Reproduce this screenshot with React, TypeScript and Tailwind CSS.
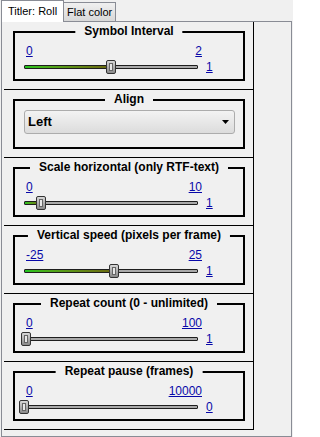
import React from 'react'

type Section = {
  title: string
  combo?: string
  min?: string
  max?: string
  value?: string
  pos?: number
}

const sections: Section[] = [
  { title: 'Symbol Interval', min: '0', max: '2', value: '1', pos: 0.5 },
  { title: 'Align', combo: 'Left' },
  { title: 'Scale horizontal (only RTF-text)', min: '0', max: '10', value: '1', pos: 0.1 },
  { title: 'Vertical speed (pixels per frame)', min: '-25', max: '25', value: '1', pos: 0.52 },
  { title: 'Repeat count (0 - unlimited)', min: '0', max: '100', value: '1', pos: 0.01 },
  { title: 'Repeat pause (frames)', min: '0', max: '10000', value: '0', pos: 0 }
]

const TRACK = 174

const Slider: React.FC<{ pos: number }> = ({ pos }) => {
  const center = pos * TRACK
  return (
    <div className="relative w-[174px] h-[14px] flex items-center">
      <div className="w-full h-[4px] bg-[#a9a9a9] border border-[#1e1e1e] rounded-[1px]" />
      <div
        className="absolute left-[1px] top-[6px] h-[2px] bg-gradient-to-r from-[#1fc41f] to-[#6a6510]"
        style={{ width: center }}
      />
      <div
        className="absolute top-0 w-[10px] h-[14px] rounded-[2px] border border-[#333] bg-gradient-to-b from-[#d8d8d8] to-[#8a8a8a] flex items-center justify-center"
        style={{ left: center - 5 }}
      >
        <div className="w-[4px] h-[8px] bg-[#e8e8e8] border border-[#666]" />
      </div>
    </div>
  )
}

const Link: React.FC<{ children: React.ReactNode }> = ({ children }) => (
  <span className="text-[#0808a8] underline underline-offset-[1px] leading-[14px]">{children}</span>
)

const GroupBox: React.FC<{ s: Section }> = ({ s }) => (
  <div className="relative ml-[9px] w-[232px] h-[50px] border-2 border-black">
    <div className="absolute left-1/2 -translate-x-1/2 top-[-9px] px-[9px] bg-[#f0f0f0] whitespace-nowrap font-bold text-[12px] leading-[14px] text-black">
      {s.title}
    </div>
    {s.combo ? (
      <div className="pt-[9px] pl-[9px]">
        <div className="w-[211px] h-[24px] flex items-center justify-between pl-[3px] pr-[5px] rounded-[3px] border border-[#acacac] bg-gradient-to-b from-[#f3f3f3] to-[#dcdcdc]">
          <span className="font-bold text-[13px] leading-[16px] text-black">{s.combo}</span>
          <svg width="7" height="4" viewBox="0 0 7 4">
            <polygon points="0,0 7,0 3.5,4" fill="#000" />
          </svg>
        </div>
      </div>
    ) : (
      <div className="pl-[9px] pt-[11px]">
        <div className="w-[178px] flex justify-between text-[12px] leading-[14px] pl-[2px]">
          <Link>{s.min}</Link>
          <Link>{s.max}</Link>
        </div>
        <div className="mt-[2px] flex items-center">
          <Slider pos={s.pos ?? 0} />
          <span className="ml-[8px] text-[12px] leading-[14px]">
            <Link>{s.value}</Link>
          </span>
        </div>
      </div>
    )}
  </div>
)

export default function App() {
  return (
    <div className="w-[293px] h-[437px] bg-[#f0f0f0] font-['Liberation_Sans',Arial,sans-serif] text-black overflow-hidden">
      {/* tabs */}
      <div className="h-[21px] flex items-end pl-[1px]">
        <div className="relative z-10 w-[63px] h-[22px] mb-[-1px] bg-white border border-b-0 border-[#898c95] flex items-center pl-[6px] pb-[1px] text-[11px]">
          Titler: Roll
        </div>
        <div className="w-[52px] h-[19px] border border-b-0 border-l-0 border-[#898c95] bg-gradient-to-b from-[#f0f0f0] to-[#d8d8d8] flex items-center pl-[3px] text-[11px]">
          Flat color
        </div>
      </div>

      {/* page */}
      <div className="ml-[1px] w-[291px] h-[416px] border border-[#898c95] pl-[2px]">
        <div className="w-[250px] border-r border-black">
          {sections.map((s, i) => (
            <div key={i} className="h-[68px] pt-[9px] border-b border-black">
              <GroupBox s={s} />
            </div>
          ))}
        </div>
      </div>
    </div>
  )
}
